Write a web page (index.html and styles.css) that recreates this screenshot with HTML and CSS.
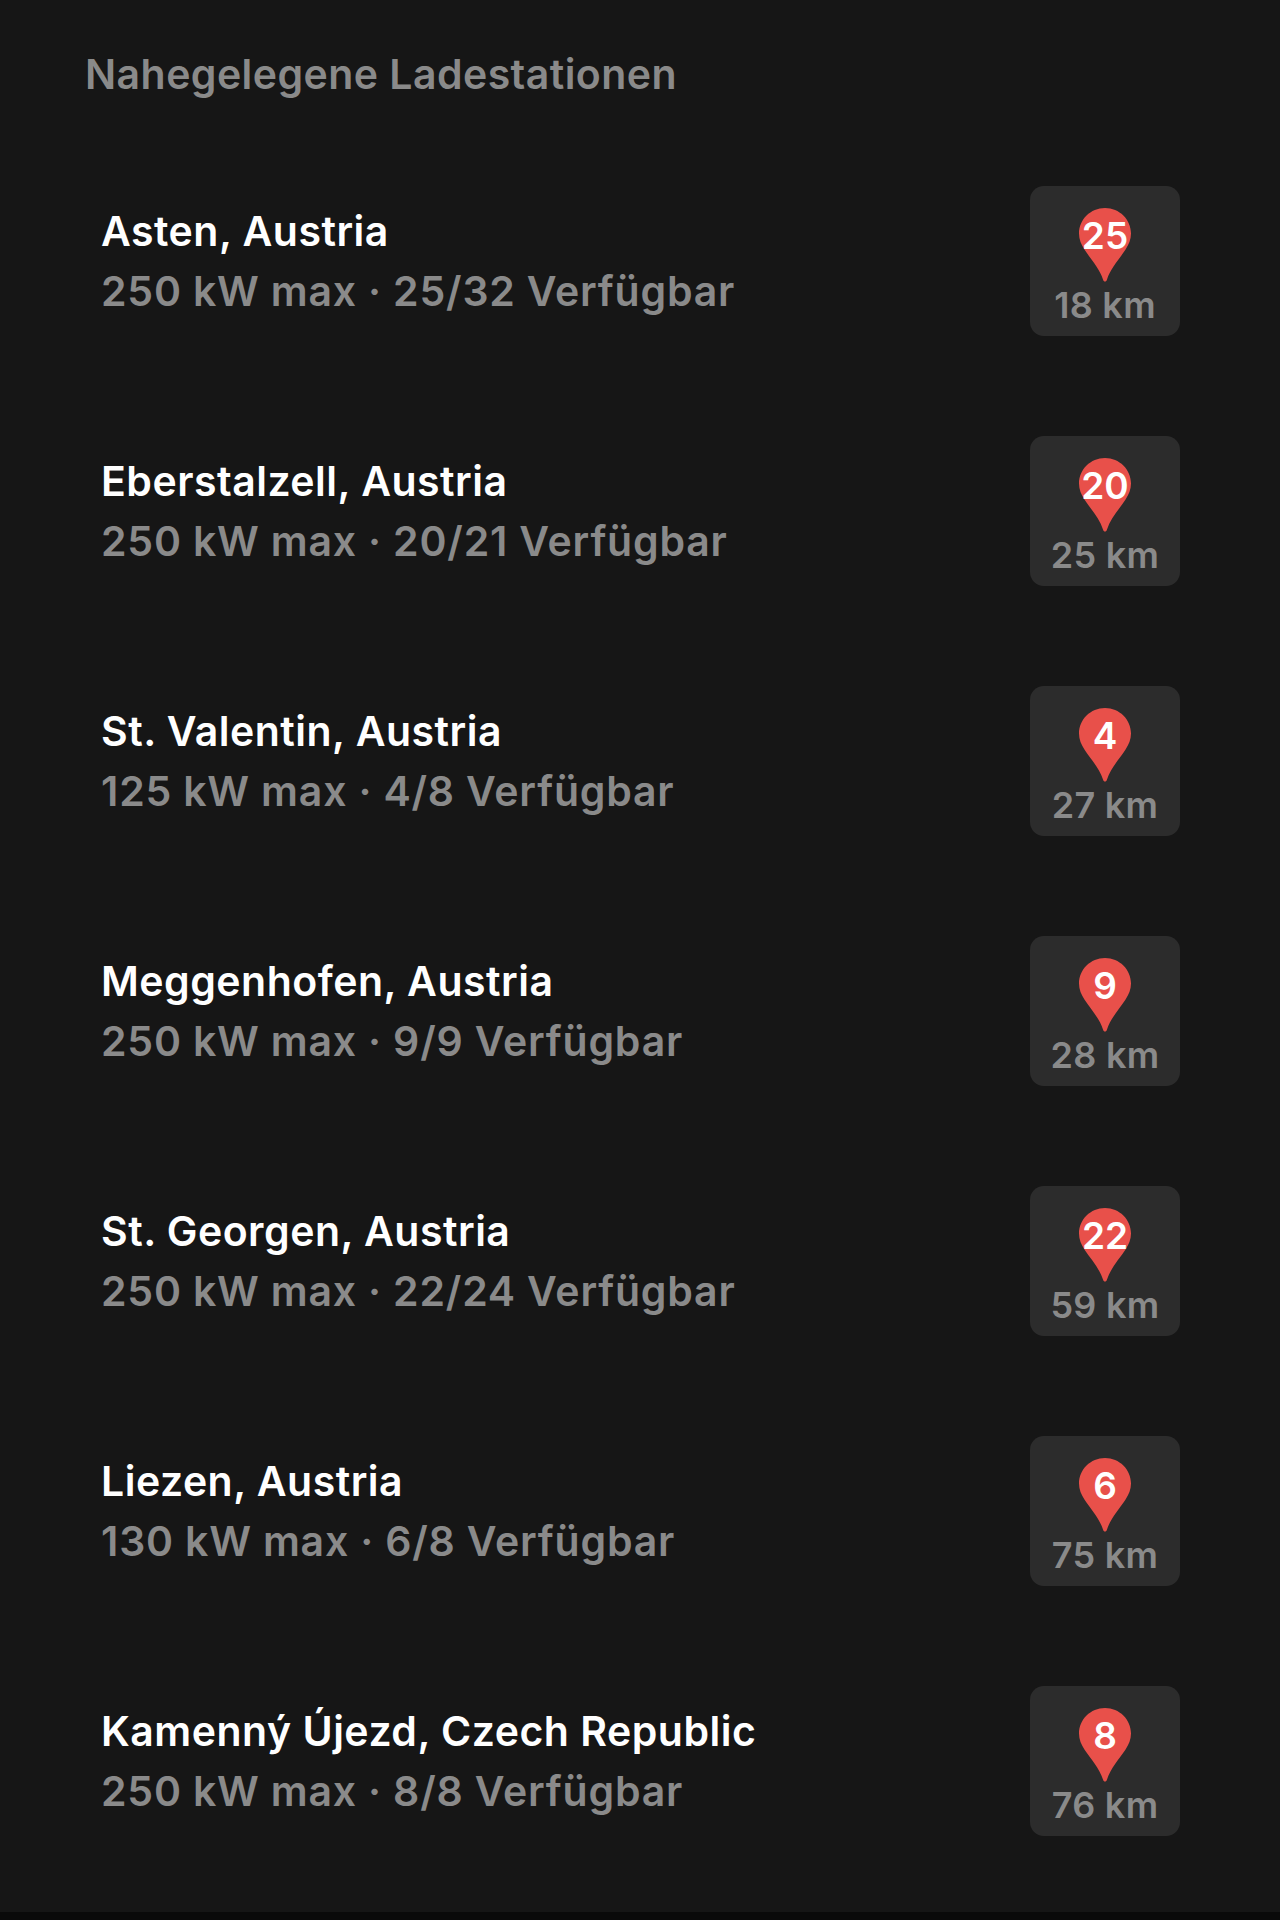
FILE: index.html
```html
<!DOCTYPE html>
<html lang="de">
<head>
    <meta charset="UTF-8">
    <meta name="viewport" content="width=device-width, initial-scale=1.0">
    <title>Nahegelegene Ladestationen</title>
    <link rel="stylesheet" href="styles.css">
</head>
<body>
    <div class="panel">
        <h1 class="panel-title">Nahegelegene Ladestationen</h1>

        <div class="station-list">
            <div class="station">
                <div class="station-info">
                    <h3>Asten, Austria</h3>
                    <p>250 kW max · 25/32 Verfügbar</p>
                </div>
                <div class="distance-tile">
                    <div class="pin">
                        <svg viewBox="0 0 52 74"><path d="M26 0C11.6 0 0 11.5 0 25.6c0 6 2.2 11 5.6 16.2C11.4 50.6 20.6 60.500 24 71.500c.7 2.700 3.300 2.700 4 0C31.400 60.500 40.600 50.600 46.400 41.800 49.800 36.600 52 31.600 52 25.600 52 11.500 40.400 0 26 0Z"/></svg>
                        <span>25</span>
                    </div>
                    <div class="distance">18 km</div>
                </div>
            </div>
            <div class="station">
                <div class="station-info">
                    <h3>Eberstalzell, Austria</h3>
                    <p>250 kW max · 20/21 Verfügbar</p>
                </div>
                <div class="distance-tile">
                    <div class="pin">
                        <svg viewBox="0 0 52 74"><path d="M26 0C11.6 0 0 11.5 0 25.6c0 6 2.2 11 5.6 16.2C11.4 50.6 20.6 60.500 24 71.500c.7 2.700 3.300 2.700 4 0C31.400 60.500 40.600 50.600 46.400 41.800 49.800 36.600 52 31.600 52 25.600 52 11.500 40.400 0 26 0Z"/></svg>
                        <span>20</span>
                    </div>
                    <div class="distance">25 km</div>
                </div>
            </div>
            <div class="station">
                <div class="station-info">
                    <h3>St. Valentin, Austria</h3>
                    <p>125 kW max · 4/8 Verfügbar</p>
                </div>
                <div class="distance-tile">
                    <div class="pin">
                        <svg viewBox="0 0 52 74"><path d="M26 0C11.6 0 0 11.5 0 25.6c0 6 2.2 11 5.6 16.2C11.4 50.6 20.6 60.500 24 71.500c.7 2.700 3.300 2.700 4 0C31.400 60.500 40.600 50.600 46.400 41.800 49.800 36.600 52 31.600 52 25.600 52 11.500 40.400 0 26 0Z"/></svg>
                        <span>4</span>
                    </div>
                    <div class="distance">27 km</div>
                </div>
            </div>
            <div class="station">
                <div class="station-info">
                    <h3>Meggenhofen, Austria</h3>
                    <p>250 kW max · 9/9 Verfügbar</p>
                </div>
                <div class="distance-tile">
                    <div class="pin">
                        <svg viewBox="0 0 52 74"><path d="M26 0C11.6 0 0 11.5 0 25.6c0 6 2.2 11 5.6 16.2C11.4 50.6 20.6 60.500 24 71.500c.7 2.700 3.300 2.700 4 0C31.400 60.500 40.600 50.600 46.400 41.800 49.800 36.600 52 31.600 52 25.600 52 11.500 40.400 0 26 0Z"/></svg>
                        <span>9</span>
                    </div>
                    <div class="distance">28 km</div>
                </div>
            </div>
            <div class="station">
                <div class="station-info">
                    <h3>St. Georgen, Austria</h3>
                    <p>250 kW max · 22/24 Verfügbar</p>
                </div>
                <div class="distance-tile">
                    <div class="pin">
                        <svg viewBox="0 0 52 74"><path d="M26 0C11.6 0 0 11.5 0 25.6c0 6 2.2 11 5.6 16.2C11.4 50.6 20.6 60.500 24 71.500c.7 2.700 3.300 2.700 4 0C31.400 60.500 40.600 50.600 46.400 41.800 49.800 36.600 52 31.600 52 25.600 52 11.500 40.400 0 26 0Z"/></svg>
                        <span>22</span>
                    </div>
                    <div class="distance">59 km</div>
                </div>
            </div>
            <div class="station">
                <div class="station-info">
                    <h3>Liezen, Austria</h3>
                    <p>130 kW max · 6/8 Verfügbar</p>
                </div>
                <div class="distance-tile">
                    <div class="pin">
                        <svg viewBox="0 0 52 74"><path d="M26 0C11.6 0 0 11.5 0 25.6c0 6 2.2 11 5.6 16.2C11.4 50.6 20.6 60.500 24 71.500c.7 2.700 3.300 2.700 4 0C31.400 60.500 40.600 50.600 46.400 41.800 49.800 36.600 52 31.600 52 25.600 52 11.500 40.400 0 26 0Z"/></svg>
                        <span>6</span>
                    </div>
                    <div class="distance">75 km</div>
                </div>
            </div>
            <div class="station">
                <div class="station-info">
                    <h3>Kamenný Újezd, Czech Republic</h3>
                    <p>250 kW max · 8/8 Verfügbar</p>
                </div>
                <div class="distance-tile">
                    <div class="pin">
                        <svg viewBox="0 0 52 74"><path d="M26 0C11.6 0 0 11.5 0 25.6c0 6 2.2 11 5.6 16.2C11.4 50.6 20.6 60.500 24 71.500c.7 2.700 3.300 2.700 4 0C31.400 60.500 40.600 50.600 46.400 41.800 49.800 36.600 52 31.600 52 25.600 52 11.500 40.400 0 26 0Z"/></svg>
                        <span>8</span>
                    </div>
                    <div class="distance">76 km</div>
                </div>
            </div>
        </div>
    </div>
</body>
</html>
```

FILE: styles.css
```css
:root {
    --background: #161616;
    --bottom-bar: #0a0a0a;
    --tile: #2c2c2c;
    --text: #ffffff;
    --text-muted: #8a8a8a;
    --pin: #e8504a;
}

html {
    background-color: var(--bottom-bar);
}

body {
    margin: 0;
    padding: 0;
    font-family: Inter, "Noto Sans", sans-serif;
    color: var(--text);
}

.panel {
    height: 1912px;
    box-sizing: border-box;
    padding: 50px 100px 0 85px;
    background-color: var(--background);
}

.panel-title {
    margin: 0;
    font-size: 41px;
    line-height: 48px;
    font-weight: 560;
    letter-spacing: 0.45px;
    color: var(--text-muted);
}

.station-list {
    display: flex;
    flex-direction: column;
    gap: 100px;
    margin-top: 88px;
    padding-left: 16px;
}

.station {
    display: flex;
    justify-content: space-between;
    align-items: center;
    height: 150px;
}

.station-info h3 {
    margin: 0;
    font-size: 41px;
    line-height: 60px;
    font-weight: 560;
    letter-spacing: 0.5px;
}

.station-info p {
    margin: 0;
    font-size: 41px;
    line-height: 60px;
    font-weight: 560;
    letter-spacing: 0.8px;
    color: var(--text-muted);
}

.distance-tile {
    display: flex;
    flex-direction: column;
    align-items: center;
    width: 150px;
    height: 150px;
    box-sizing: border-box;
    padding-top: 22px;
    border-radius: 14px;
    background-color: var(--tile);
}

.pin {
    position: relative;
    width: 52px;
    height: 74px;
}

.pin svg {
    display: block;
    width: 52px;
    height: 74px;
    fill: var(--pin);
}

.pin span {
    position: absolute;
    top: 6px;
    left: 0;
    right: 0;
    text-align: center;
    font-size: 37px;
    line-height: 44px;
    font-weight: 560;
}

.distance {
    margin-top: 1px;
    font-size: 36px;
    line-height: 44px;
    font-weight: 560;
    letter-spacing: 0.3px;
    color: var(--text-muted);
}
```
